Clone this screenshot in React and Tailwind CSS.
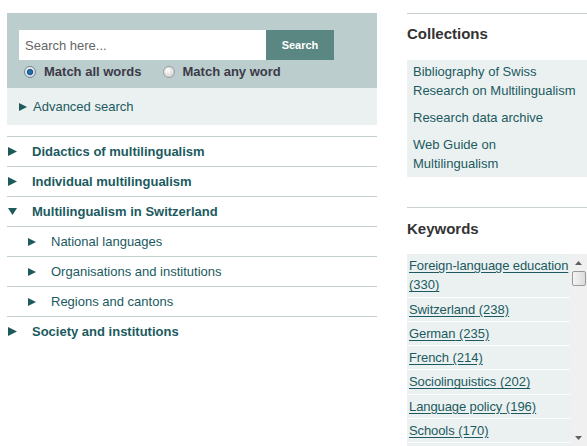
import React from 'react';

const Arrow = ({ down = false, w = 9, h = 9 }) =>
  down ? (
    <svg width={w} height={h} viewBox="0 0 10 10" className="shrink-0">
      <polygon points="0,1 10,1 5,9" fill="#1d5a5c" />
    </svg>
  ) : (
    <svg width={w} height={h} viewBox="0 0 10 10" className="shrink-0">
      <polygon points="0,0 10,5 0,10" fill="#1d5a5c" />
    </svg>
  );

const Radio = ({ checked }) => (
  <svg width="12" height="12" viewBox="0 0 12 12" className="shrink-0">
    <defs>
      <radialGradient id={checked ? 'rg1' : 'rg2'} cx="40%" cy="35%" r="70%">
        <stop offset="0%" stopColor="#ffffff" />
        <stop offset="100%" stopColor={checked ? '#c9d6e2' : '#cfcfcf'} />
      </radialGradient>
    </defs>
    <circle cx="6" cy="6" r="5.5" fill={`url(#${checked ? 'rg1' : 'rg2'})`} stroke={checked ? '#6e8498' : '#9a9a9a'} />
    {checked && <circle cx="6" cy="6" r="2.8" fill="#1f6fb0" stroke="#183d5c" strokeWidth="0.8" />}
  </svg>
);

const topics = [
  { label: 'Didactics of multilingualism', level: 0 },
  { label: 'Individual multilingualism', level: 0 },
  { label: 'Multilingualism in Switzerland', level: 0, open: true },
  { label: 'National languages', level: 1 },
  { label: 'Organisations and institutions', level: 1 },
  { label: 'Regions and cantons', level: 1 },
  { label: 'Society and institutions', level: 0 },
];

const collections = [
  'Bibliography of Swiss Research on Multilingualism',
  'Research data archive',
  'Web Guide on Multilingualism',
];

const keywords = [
  ['Foreign-language education', '(330)'],
  ['Switzerland', '(238)'],
  ['German', '(235)'],
  ['French', '(214)'],
  ['Sociolinguistics', '(202)'],
  ['Language policy', '(196)'],
  ['Schools', '(170)'],
];

export default function App() {
  return (
    <div className="flex w-[587px] h-[446px] overflow-hidden bg-white font-['Liberation_Sans',Arial,sans-serif] text-[13px]">
      {/* left column */}
      <div className="ml-[7px] w-[370px] pt-[13px]">
        <div className="bg-[#bccdcd] h-[75px] px-[12px] pt-[17px]">
          <div className="flex">
            <input
              type="text"
              placeholder="Search here..."
              className="w-[247px] h-[30px] bg-white px-[6px] text-[13px] text-[#333] placeholder:text-[#666] outline-none"
            />
            <button className="w-[68px] h-[30px] bg-[#5b8783] text-white font-bold text-[11px]">Search</button>
          </div>
          <div className="flex items-center h-[24px] pl-[5px] font-bold text-[#3b3a48]">
            <Radio checked />
            <span className="ml-[8px]">Match all words</span>
            <span className="ml-[21px]"><Radio /></span>
            <span className="ml-[8px]">Match any word</span>
          </div>
        </div>
        <div className="bg-[#ebf1f1] h-[37px] flex items-center pl-[12px] pt-[1px] text-[#1b5a60]">
          <Arrow w={8} h={8} />
          <span className="ml-[6px]">Advanced search</span>
        </div>
        <div className="mt-[11px]">
          {topics.map((t) => (
            <div
              key={t.label}
              className={
                t.level === 0
                  ? 'flex items-center h-[30px] border-t border-[#c3cfcf] pl-[1px] font-bold text-[#1b5a60]'
                  : 'flex items-center h-[30px] border-t border-[#c3cfcf] pl-[21px] text-[#1b5a60]'
              }
            >
              {t.level === 0 ? <Arrow down={t.open} w={9} h={9} /> : <Arrow w={8} h={8} />}
              <span className="ml-[15px]">{t.label}</span>
            </div>
          ))}
        </div>
      </div>

      {/* right column */}
      <div className="ml-[30px] w-[180px] pt-[13px]">
        <div className="border-t border-[#c8d0d0] h-[47px] pt-[10px]">
          <h2 className="text-[15px] leading-[20px] font-bold text-[#333]">Collections</h2>
        </div>
        <div className="bg-[#ebf1f1] pt-[2px] pb-[4px] px-[6px] flex flex-col gap-[8px] text-[#1b5a60] leading-[19px]">
          {collections.map((c) => (
            <div key={c}>{c}</div>
          ))}
        </div>

        <div className="mt-[30px] border-t border-[#c8d0d0] h-[47px] pt-[11px]">
          <h2 className="text-[15px] leading-[20px] font-bold text-[#333]">Keywords</h2>
        </div>
        <div className="flex h-[193px]">
          <div className="w-[163px] bg-[#ebf1f1] overflow-hidden">
            {keywords.map(([name, count]) => (
              <div key={name} className="border-b border-white pl-[2px] py-[2px] leading-[19.3px]">
                <span className="text-[#1b5a60] underline decoration-[#1b5a60] underline-offset-[2px]">
                  <span className="whitespace-nowrap tracking-[-0.1px]">{name}</span> {count}
                </span>
              </div>
            ))}
            <div className="h-[20px]" />
          </div>
          <div className="w-[17px] bg-[#f0f0f0] flex flex-col items-center">
            <svg width="7" height="4" viewBox="0 0 7 4" className="mt-[7px]">
              <polygon points="0,4 7,4 3.5,0" fill="#606060" />
            </svg>
            <div className="mt-[6px] w-[14px] h-[15px] border border-[#9a9a9a] rounded-[2px] bg-gradient-to-r from-[#f4f4f4] to-[#dcdcdc]" />
            <div className="flex-1" />
            <svg width="7" height="4" viewBox="0 0 7 4" className="mb-[7px]">
              <polygon points="0,0 7,0 3.5,4" fill="#606060" />
            </svg>
          </div>
        </div>
      </div>
    </div>
  );
}
